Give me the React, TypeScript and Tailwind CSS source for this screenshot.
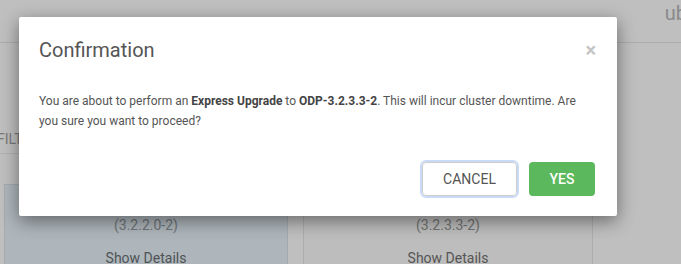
export default function App() {
  return (
    <div className="relative h-[264px] w-[681px] overflow-hidden bg-[#bfbfbf] font-['Roboto',sans-serif]">
      {/* dimmed page behind the dialog */}
      <div className="flex h-[43px] items-start justify-end border-b border-[#adadad] pr-0">
        <span className="mt-[-2px] mr-[-6px] text-[20px] text-[#8a8a8a]">ub</span>
      </div>
      <div className="ml-[-3px] mt-[86px] w-[24px] border-b border-[#b0b0b0] pb-[4px] text-[14px] leading-[20px] text-[#7a7a7a]">
        FILTER
      </div>
      <div className="mt-[30px] flex gap-[15px] pl-[4px]">
        <div className="flex h-[100px] w-[284px] flex-col items-center border border-[#a3abb0] bg-[#aeb6bb] pt-[30px] text-[14px]">
          <span className="text-[#6e7478]">(3.2.2.0-2)</span>
          <span className="mt-[12px] text-[#4f5356]">Show Details</span>
        </div>
        <div className="flex h-[100px] w-[290px] flex-col items-center border border-[#adadad] bg-[#bdbdbd] pt-[30px] text-[14px]">
          <span className="text-[#727272]">(3.2.3.3-2)</span>
          <span className="mt-[12px] text-[#555]">Show Details</span>
        </div>
      </div>

      {/* dialog */}
      <div className="absolute left-[19px] top-[17px] w-[598px] rounded-[2px] bg-white shadow-[0_5px_18px_rgba(0,0,0,0.45)]">
        <div className="flex items-start justify-between px-5 pb-[15px] pt-[22px]">
          <h4 className="text-[20px] leading-[22px] text-[#555]">Confirmation</h4>
          <button className="mt-[1px] mr-[1px] text-[20px] font-bold leading-[20px] text-[#c4c4c4]">×</button>
        </div>
        <div className="px-5 pt-[15px] text-[12px] leading-[20px] text-[#555]">
          You are about to perform an <b className="font-bold text-[#444]">Express Upgrade</b> to{" "}
          <b className="font-bold text-[#444]">ODP-3.2.3.3-2</b>. This will incur cluster downtime. Are you sure you want to proceed?
        </div>
        <div className="flex justify-end gap-[12px] pb-[20px] pr-[22px] pt-[31px]">
          <button className="h-[34px] w-[95px] rounded-[4px] border border-[#ccc] bg-white text-[14px] text-[#555] outline outline-2 outline-[#c9dcf6]">
            CANCEL
          </button>
          <button className="h-[34px] w-[66px] rounded-[4px] bg-[#5cb85c] text-[14px] font-medium text-white">
            YES
          </button>
        </div>
      </div>
    </div>
  );
}
